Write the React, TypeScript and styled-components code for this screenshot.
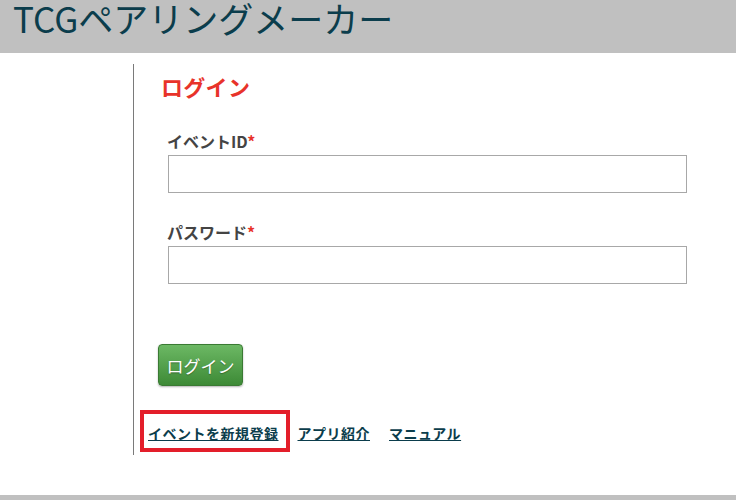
import React from 'react'
import styled, { createGlobalStyle } from 'styled-components'

const GlobalStyle = createGlobalStyle`
  body {
    margin: 0;
    background: #fff;
    font-family: 'Noto Sans CJK JP', 'Noto Sans', sans-serif;
  }
`

const Header = styled.header`
  height: 53px;
  background: #c0c0c0;
  padding: 0 0 0 13px;
  box-sizing: border-box;
  overflow: hidden;
`

const Title = styled.h1`
  margin: -4px 0 0;
  font-size: 35px;
  font-weight: 400;
  line-height: 44px;
  color: #0b3d4c;
`

const Main = styled.main`
  padding: 11px 0 0 133px;
`

const Panel = styled.section`
  border-left: 1px solid #7a7a7a;
  height: 391px;
  padding-left: 14px;
  box-sizing: border-box;
`

const Heading = styled.h2`
  margin: 0;
  padding: 7px 0 0 13px;
  font-size: 22px;
  font-weight: 700;
  line-height: 30px;
  color: #e8332a;
  letter-spacing: 0.3px;
`

const Field = styled.div<{ $gap: number }>`
  margin: ${(p) => p.$gap}px 0 0 19px;
  display: flex;
  flex-direction: column;
  gap: 3px;
`

const Label = styled.label`
  font-size: 16px;
  font-weight: 700;
  line-height: 22px;
  color: #444;
`

const Required = styled.span`
  color: #e8332a;
`

const Input = styled.input`
  width: 519px;
  height: 38px;
  box-sizing: border-box;
  border: 1px solid #a8a8a8;
  margin: 0 0 0 1px;
  padding: 4px 8px;
  font-size: 16px;
`

const Button = styled.button`
  margin: 60px 0 0 10px;
  width: 85px;
  height: 42px;
  border: 1px solid #3a7a33;
  border-radius: 4px;
  background: linear-gradient(#6cb864, #3d8a36);
  color: #fff;
  font-family: inherit;
  font-size: 17px;
  text-shadow: 0 1px 1px rgba(0, 0, 0, 0.3);
  box-shadow: 0 1px 2px rgba(0, 0, 0, 0.3);
  cursor: pointer;
`

const Links = styled.nav`
  display: flex;
  gap: 19px;
  margin-top: 37px;
`

const Link = styled.a`
  position: relative;
  font-size: 14px;
  font-weight: 700;
  line-height: 20px;
  color: #0b3d4c;
  text-decoration: underline;
  letter-spacing: 0.5px;
`

const Marker = styled.span`
  position: absolute;
  left: -8px;
  right: -11px;
  top: -13px;
  bottom: -9px;
  border: 4px solid #e31e2a;
  pointer-events: none;
`

const Footer = styled.footer`
  margin-top: 40px;
  height: 6px;
  background: #c0c0c0;
`

export default function App() {
  return (
    <>
      <GlobalStyle />
      <Header>
        <Title>TCGペアリングメーカー</Title>
      </Header>
      <Main>
        <Panel>
          <Heading>ログイン</Heading>
          <Field $gap={29}>
            <Label>
              イベントID<Required>*</Required>
            </Label>
            <Input type="text" />
          </Field>
          <Field $gap={28}>
            <Label>
              パスワード<Required>*</Required>
            </Label>
            <Input type="password" />
          </Field>
          <Button>ログイン</Button>
          <Links>
            <Link href="#">
              イベントを新規登録
              <Marker />
            </Link>
            <Link href="#">アプリ紹介</Link>
            <Link href="#">マニュアル</Link>
          </Links>
        </Panel>
      </Main>
      <Footer />
    </>
  )
}
